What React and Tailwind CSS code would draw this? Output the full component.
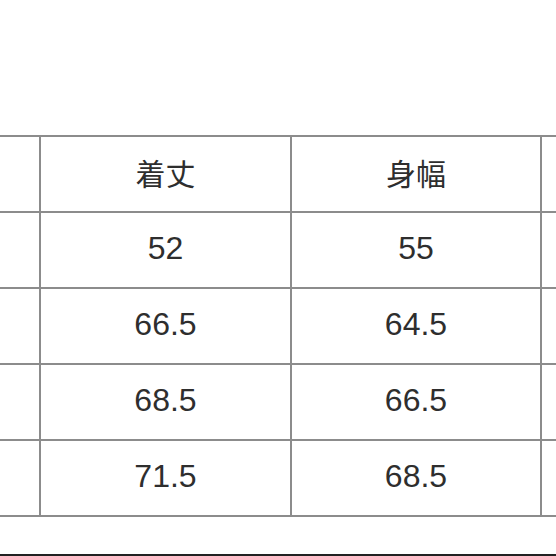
const rows = [
  ['', '着丈', '身幅', ''],
  ['', '52', '55', ''],
  ['', '66.5', '64.5', ''],
  ['', '68.5', '66.5', ''],
  ['', '71.5', '68.5', ''],
];

export default function App() {
  return (
    <div className="w-[556px] h-[556px] bg-white overflow-hidden flex flex-col">
      <div className="pt-[135px]">
        <div className="grid grid-cols-[41px_251px_250px_1fr] border-t-2 border-[#8c8c8c]">
          {rows.map((row, i) =>
            row.map((cell, j) => (
              <div
                key={`${i}-${j}`}
                className={`h-[76px] border-b-2 border-[#8c8c8c] flex items-center justify-center pb-[4px] text-[#2e2e2e] ${
                  j < 3 ? 'border-r-2' : ''
                } ${
                  i === 0
                    ? "text-[30px] font-['Noto_Sans_CJK_JP',sans-serif]"
                    : "text-[32px] font-['Liberation_Sans',Arial,sans-serif]"
                }`}
              >
                {cell}
              </div>
            ))
          )}
        </div>
      </div>
      <div className="mt-auto h-[2px] bg-[#222]" />
    </div>
  );
}
